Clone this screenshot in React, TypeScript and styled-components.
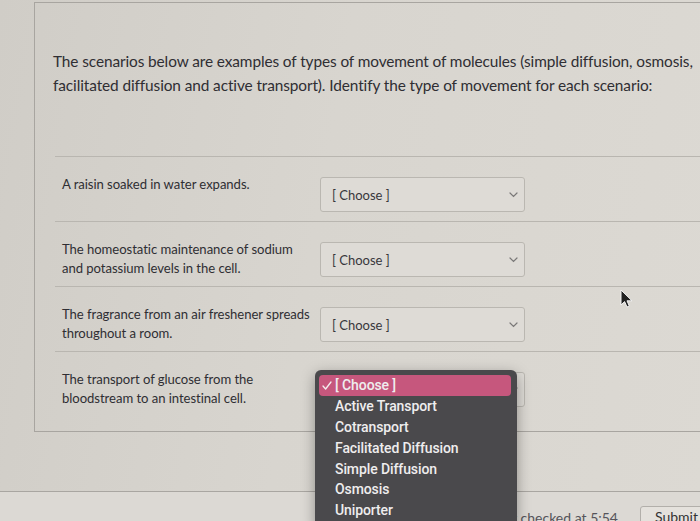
import React from 'react';
import styled, { createGlobalStyle } from 'styled-components';

const GlobalStyle = createGlobalStyle`
  html, body {
    margin: 0;
    padding: 0;
    background: #d2cfc9;
    overflow: hidden;
  }
  body {
    font-family: Lato, "Open Sans", sans-serif;
    color: #35343a;
  }
`;

const Page = styled.div`
  position: relative;
  width: 700px;
  height: 521px;
  overflow: hidden;
  padding-top: 2px;
  box-sizing: border-box;
  background: linear-gradient(100deg, #d0cdc7 0%, #d8d5cf 45%, #dcd9d3 100%);
`;

const QuestionBox = styled.section`
  margin-left: 34px;
  width: 700px;
  border-top: 1px solid #a8a5a0;
  border-left: 1px solid #a8a5a0;
  border-bottom: 1px solid #a8a5a0;
  padding: 46px 0 0 18px;
  box-sizing: border-box;
`;

const Prompt = styled.p`
  margin: 0;
  font-size: 15.4px;
  line-height: 24px;
  color: #2f2e33;
  letter-spacing: -0.1px;
`;

const AnswerList = styled.div`
  margin: 59px 0 0 2px;
`;

const AnswerRow = styled.div<{ $last?: boolean }>`
  display: grid;
  grid-template-columns: 258px 205px;
  align-items: start;
  height: ${(p) => (p.$last ? 80 : 65)}px;
  box-sizing: border-box;
  border-top: 1px solid #b9b6b0;
  padding: 20px 0 0 7px;
`;

const AnswerText = styled.div`
  font-size: 13.1px;
  line-height: 19px;
  margin-top: -2px;
  padding-right: 4px;
  color: #2f2e33;
  letter-spacing: -0.05px;
`;

const SelectWrap = styled.div`
  position: relative;
`;

const SelectBox = styled.div`
  display: flex;
  align-items: center;
  justify-content: space-between;
  height: 35px;
  box-sizing: border-box;
  padding: 0 6px 0 11px;
  background: #dedbd6;
  border: 1px solid #bab7b1;
  border-radius: 3px;
  font-size: 13px;
  color: #38373c;
`;

const Chevron = () => (
  <svg width="9" height="6" viewBox="0 0 9 6" fill="none">
    <path d="M1 1l3.5 3.5L8 1" stroke="#7a7878" strokeWidth="1.2" strokeLinecap="round" />
  </svg>
);

const Menu = styled.ul`
  position: absolute;
  top: -2px;
  left: -5px;
  width: 202px;
  margin: 0;
  padding: 5px 6px 6px 4px;
  list-style: none;
  background: #4a494c;
  border-radius: 6px;
  box-shadow: 0 4px 14px rgba(0, 0, 0, 0.35);
  box-sizing: border-box;
  z-index: 2;
  font-family: Roboto, Inter, sans-serif;
  font-weight: 500;
  font-size: 14px;
  color: #efedee;
`;

const MenuItem = styled.li<{ $active?: boolean }>`
  display: grid;
  grid-template-columns: 11px 1fr;
  column-gap: 2px;
  align-items: center;
  height: 20.8px;
  padding-left: 3px;
  border-radius: 4px;
  background: ${(p) => (p.$active ? '#c6577d' : 'transparent')};
  letter-spacing: -0.1px;
`;

const Check = styled.svg`
  display: block;
`;

const Footer = styled.footer`
  margin-top: 59px;
  border-top: 1px solid #a9a6a1;
  background: #dcd9d4;
  height: 40px;
  display: flex;
  justify-content: flex-end;
  align-items: flex-start;
  gap: 22px;
  padding: 14px 0 0 0;
  box-sizing: border-box;
`;

const SavedNote = styled.span`
  font-size: 14px;
  color: #55545a;
  margin-top: 3px;
`;

const SubmitButton = styled.button`
  width: 80px;
  height: 34px;
  margin-right: -20px;
  background: #e4e1dc;
  border: 1px solid #b2afaa;
  border-radius: 3px;
  font-family: Lato, sans-serif;
  font-size: 14px;
  color: #333;
  text-align: left;
  padding-left: 14px;
`;

const Cursor = styled.svg`
  position: absolute;
  left: 620px;
  top: 289px;
`;

const options = [
  'Active Transport',
  'Cotransport',
  'Facilitated Diffusion',
  'Simple Diffusion',
  'Osmosis',
  'Uniporter',
];

const rows = [
  'A raisin soaked in water expands.',
  'The homeostatic maintenance of sodium and potassium levels in the cell.',
  'The fragrance from an air freshener spreads throughout a room.',
  'The transport of glucose from the bloodstream to an intestinal cell.',
];

const App: React.FC = () => {
  return (
    <Page>
      <GlobalStyle />
      <QuestionBox>
        <Prompt>
          The scenarios below are examples of types of movement of molecules (simple diffusion, osmosis,
          facilitated diffusion and active transport). Identify the type of movement for each scenario:
        </Prompt>
        <AnswerList>
          {rows.map((text, i) => {
            const open = i === rows.length - 1;
            return (
              <AnswerRow key={i} $last={open}>
                <AnswerText>{text}</AnswerText>
                <SelectWrap>
                  <SelectBox>
                    <span>[ Choose ]</span>
                    <Chevron />
                  </SelectBox>
                  {open && (
                    <Menu>
                      <MenuItem $active>
                        <Check width="10" height="9" viewBox="0 0 10 9" fill="none">
                          <path d="M1 5l2.6 3L9 1" stroke="#f4eef0" strokeWidth="1.3" strokeLinecap="round" strokeLinejoin="round" />
                        </Check>
                        <span>[ Choose ]</span>
                      </MenuItem>
                      {options.map((o) => (
                        <MenuItem key={o}>
                          <span />
                          <span>{o}</span>
                        </MenuItem>
                      ))}
                    </Menu>
                  )}
                </SelectWrap>
              </AnswerRow>
            );
          })}
        </AnswerList>
      </QuestionBox>
      <Footer>
        <SavedNote>Last checked at 5:54</SavedNote>
        <SubmitButton>Submit Quiz</SubmitButton>
      </Footer>
      <Cursor width="13" height="19" viewBox="0 0 13 19">
        <path d="M1 1v15l3.6-3.4 2.4 5.4 2.3-1-2.3-5.2H12z" fill="#222" stroke="#f4f4f4" strokeWidth="1" />
      </Cursor>
    </Page>
  );
};

export default App;
